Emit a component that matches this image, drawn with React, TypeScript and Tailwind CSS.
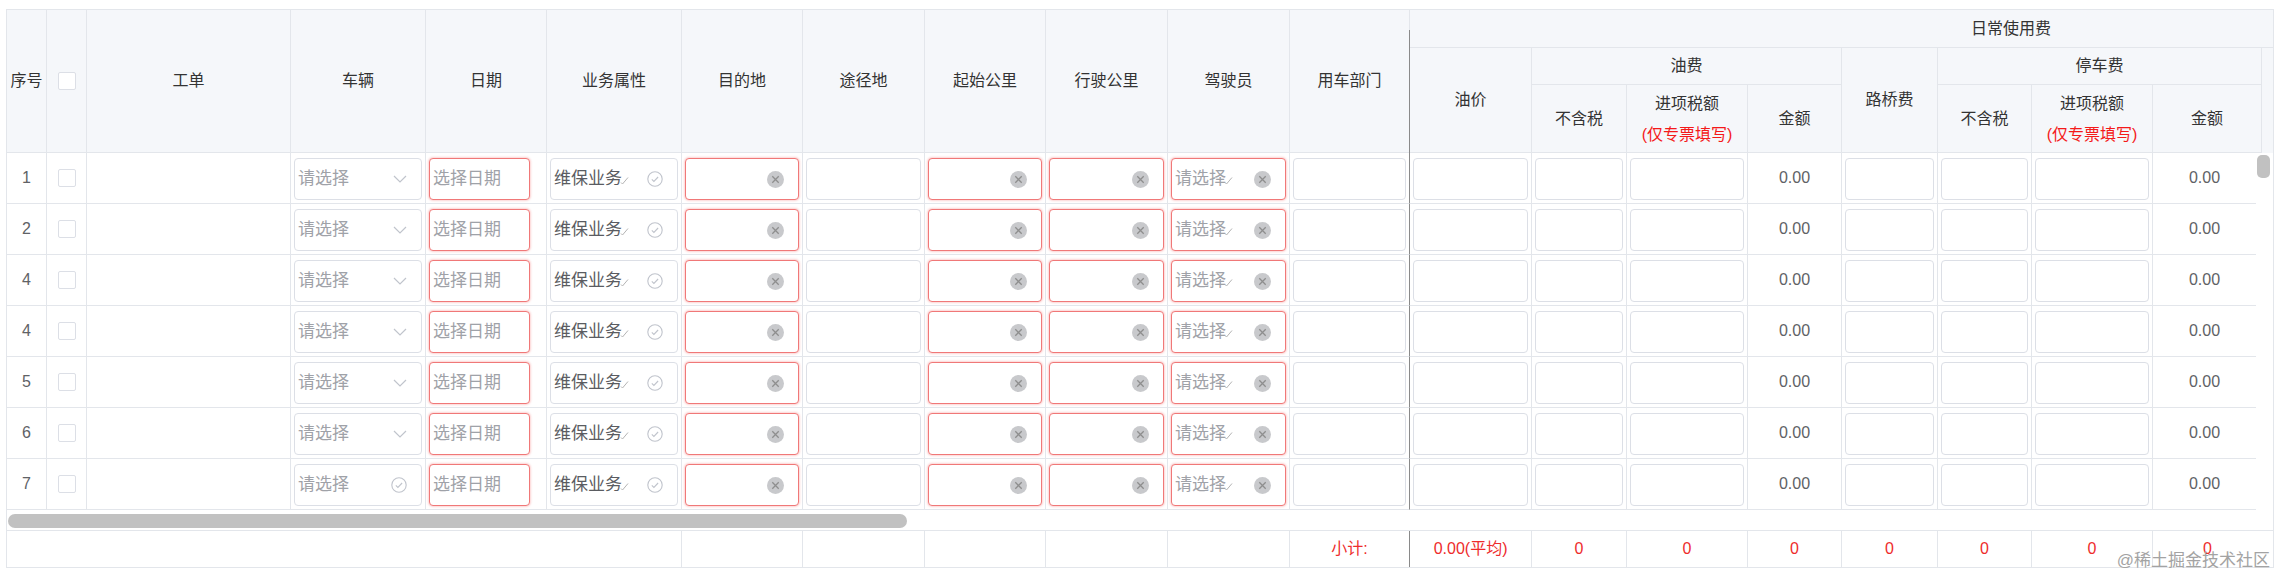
import React from "react";

const widths = [40, 40, 204, 135, 121, 135, 121, 122, 121, 122, 122, 120, 122, 95, 121, 94, 96, 94, 121, 109];
const bodyWidths = [...widths.slice(0, 19), 103];
const leftHeads = ["序号", "", "工单", "车辆", "日期", "业务属性", "目的地", "途径地", "起始公里", "行驶公里", "驾驶员", "用车部门"];
const rowNums = [1, 2, 4, 4, 5, 6, 7];

const cellEdge = "border-r border-b border-[#e3e6eb]";
const deptEdge = "border-r border-b border-r-[#8a8a8a] border-b-[#e3e6eb]";

function Chevron() {
  return (
    <svg width="14" height="8" viewBox="0 0 14 8" fill="none">
      <polyline points="1,1 7,7 13,1" stroke="#c0c4cc" strokeWidth="1.2" />
    </svg>
  );
}

function CircleCheck() {
  return (
    <svg width="16" height="16" viewBox="0 0 16 16" fill="none">
      <circle cx="8" cy="8" r="7.2" stroke="#c0c4cc" strokeWidth="1.1" />
      <path d="M4.8 8.3l2.1 2.1 4.2-4.4" stroke="#c0c4cc" strokeWidth="1.1" />
    </svg>
  );
}

function CircleX() {
  return (
    <svg width="17" height="17" viewBox="0 0 17 17" fill="none">
      <circle cx="8.5" cy="8.5" r="8.5" fill="#c8c9cc" />
      <path d="M5.3 5.3l6.4 6.4M11.7 5.3l-6.4 6.4" stroke="#8e8e8e" strokeWidth="1.3" />
    </svg>
  );
}

function TinyCheck() {
  return (
    <svg width="9" height="9" viewBox="0 0 9 9" fill="none" className="-ml-[2px] mt-[3px]">
      <path d="M1 6.5l1.5 1.5L8 1.5" stroke="#b4b4b4" strokeWidth="1" />
    </svg>
  );
}

type FieldProps = {
  error?: boolean;
  text?: string;
  placeholder?: string;
  tiny?: boolean;
  icon?: React.ReactNode;
  narrow?: boolean;
};

function Field({ error, text, placeholder, tiny, icon, narrow }: FieldProps) {
  return (
    <div
      className={`flex h-[42px] items-center rounded-[4px] border bg-white pl-[3px] pr-[14px] text-[17px] ${
        narrow ? "w-[101px]" : "w-full"
      } ${error ? "border-[#f07878] shadow-[0_0_2px_1px_rgba(245,108,108,0.3)]" : "border-[#dcdfe6]"}`}
    >
      {text && <span className="text-[#5a5c61] whitespace-nowrap">{text}</span>}
      {placeholder && <span className="text-[#9fa2a8] whitespace-nowrap">{placeholder}</span>}
      {tiny && <TinyCheck />}
      <div className="flex-1" />
      {icon}
    </div>
  );
}

function Checkbox() {
  return <div className="h-[18px] w-[18px] rounded-[2px] border border-[#dcdfe6] bg-white" />;
}

function Colgroup({ list }: { list: number[] }) {
  return (
    <colgroup>
      {list.map((w, i) => (
        <col key={i} style={{ width: w }} />
      ))}
    </colgroup>
  );
}

function Header() {
  const th = "bg-[#f5f7fa] p-0 text-center align-middle font-normal text-[16px] text-[#333]";
  return (
    <table className="table-fixed border-separate border-spacing-0 w-[2266px]">
      <Colgroup list={[...widths, 11]} />
      <thead>
        <tr>
          {leftHeads.map((h, i) => (
            <th key={i} rowSpan={3} className={`${th} ${cellEdge} ${i === 11 ? "relative" : ""}`}>
              {i === 1 ? (
                <div className="flex justify-center">
                  <Checkbox />
                </div>
              ) : (
                h
              )}
              {i === 11 && <span className="absolute right-[-1px] top-[20px] bottom-[-1px] w-px bg-[#8a8a8a]" />}
            </th>
          ))}
          <th colSpan={9} className={`${th} border-b border-[#e3e6eb] h-[38px] text-left`}>
            <span className="pl-[561px]">日常使用费</span>
          </th>
        </tr>
        <tr>
          <th rowSpan={2} className={`${th} ${cellEdge}`}>油价</th>
          <th colSpan={3} className={`${th} ${cellEdge} h-[37px]`}>油费</th>
          <th rowSpan={2} className={`${th} ${cellEdge}`}>路桥费</th>
          <th colSpan={3} className={`${th} ${cellEdge}`}>停车费</th>
          <th rowSpan={2} className={`${th}`} />
        </tr>
        <tr>
          {["不含税", "进项税额", "金额", "不含税", "进项税额", "金额"].map((h, i) => (
            <th key={i} className={`${th} ${cellEdge} h-[68px]`}>
              {h === "进项税额" ? (
                <div className="leading-[31px]">
                  <div>进项税额</div>
                  <div className="text-[#f41a1a]">(仅专票填写)</div>
                </div>
              ) : (
                h
              )}
            </th>
          ))}
        </tr>
      </thead>
    </table>
  );
}

function BodyRow({ n, last }: { n: number; last: boolean }) {
  const cells: React.ReactNode[] = [
    <div className="flex h-[50px] items-center justify-center text-[16px] text-[#606266]">{n}</div>,
    <div className="flex h-[50px] items-center justify-center">
      <Checkbox />
    </div>,
    <div className="h-[50px]" />,
    <Field placeholder="请选择" icon={last ? <CircleCheck /> : <Chevron />} />,
    <Field narrow error placeholder="选择日期" />,
    <Field text="维保业务" tiny icon={<CircleCheck />} />,
    <Field error icon={<CircleX />} />,
    <Field />,
    <Field error icon={<CircleX />} />,
    <Field error icon={<CircleX />} />,
    <Field error placeholder="请选择" tiny icon={<CircleX />} />,
    <Field />,
    <Field />,
    <Field />,
    <Field />,
    <div className="flex h-[50px] items-center justify-center text-[16px] text-[#606266]">0.00</div>,
    <Field />,
    <Field />,
    <Field />,
    <div className="flex h-[50px] items-center justify-center text-[16px] text-[#606266]">0.00</div>,
  ];
  return (
    <tr>
      {cells.map((c, i) => {
        const plain = i <= 2 || i === 15 || i === 19;
        const edge = i === 11 ? deptEdge : i === 19 ? "border-b border-[#e3e6eb]" : cellEdge;
        return (
          <td key={i} className={`p-0 align-top ${edge}`}>
            {plain ? c : <div className="h-[50px] px-[3px] pt-[5px]">{c}</div>}
          </td>
        );
      })}
    </tr>
  );
}

function Footer() {
  const td = "p-0 text-center text-[16px] text-[#ee2c2c]";
  const zeros = Array.from({ length: 7 });
  return (
    <table className="table-fixed border-separate border-spacing-0 w-[2266px] border-t border-[#e3e6eb]">
      <Colgroup list={[...widths, 11]} />
      <tbody>
        <tr className="h-[36px]">
          <td colSpan={6} className={`${td} border-r border-[#e3e6eb]`} />
          {Array.from({ length: 5 }).map((_, i) => (
            <td key={i} className={`${td} border-r border-[#e3e6eb]`} />
          ))}
          <td className={`${td} border-r border-[#8a8a8a]`}>小计:</td>
          <td className={`${td} border-r border-[#e3e6eb]`}>0.00(平均)</td>
          {zeros.map((_, i) => (
            <td key={i} className={`${td} ${i < 6 ? "border-r border-[#e3e6eb]" : ""}`}>0</td>
          ))}
          <td className={td} />
        </tr>
      </tbody>
    </table>
  );
}

export default function App() {
  return (
    <div className="relative h-[582px] w-[2277px] overflow-hidden bg-white pl-[6px] pt-[9px] font-['Liberation_Sans','Noto_Sans_CJK_SC',sans-serif]">
      <div className="w-[2268px] border border-[#e3e6eb]">
        <Header />
        <div className="flex">
          <table className="table-fixed border-separate border-spacing-0 w-[2249px]">
            <Colgroup list={bodyWidths} />
            <tbody>
              {rowNums.map((n, i) => (
                <BodyRow key={i} n={n} last={i === rowNums.length - 1} />
              ))}
            </tbody>
          </table>
          <div className="w-[17px] bg-white">
            <div className="ml-px mt-[2px] h-[23px] w-[13px] rounded-[5px] bg-[#c1c1c1]" />
          </div>
        </div>
        <div className="h-[20px] bg-white pt-[4px]">
          <div className="ml-px h-[14px] w-[899px] rounded-full bg-[#c1c1c1]" />
        </div>
        <Footer />
      </div>
      <div className="absolute right-[7px] top-[548px] text-[17px] text-[#a3a3a3]">@稀土掘金技术社区</div>
    </div>
  );
}
